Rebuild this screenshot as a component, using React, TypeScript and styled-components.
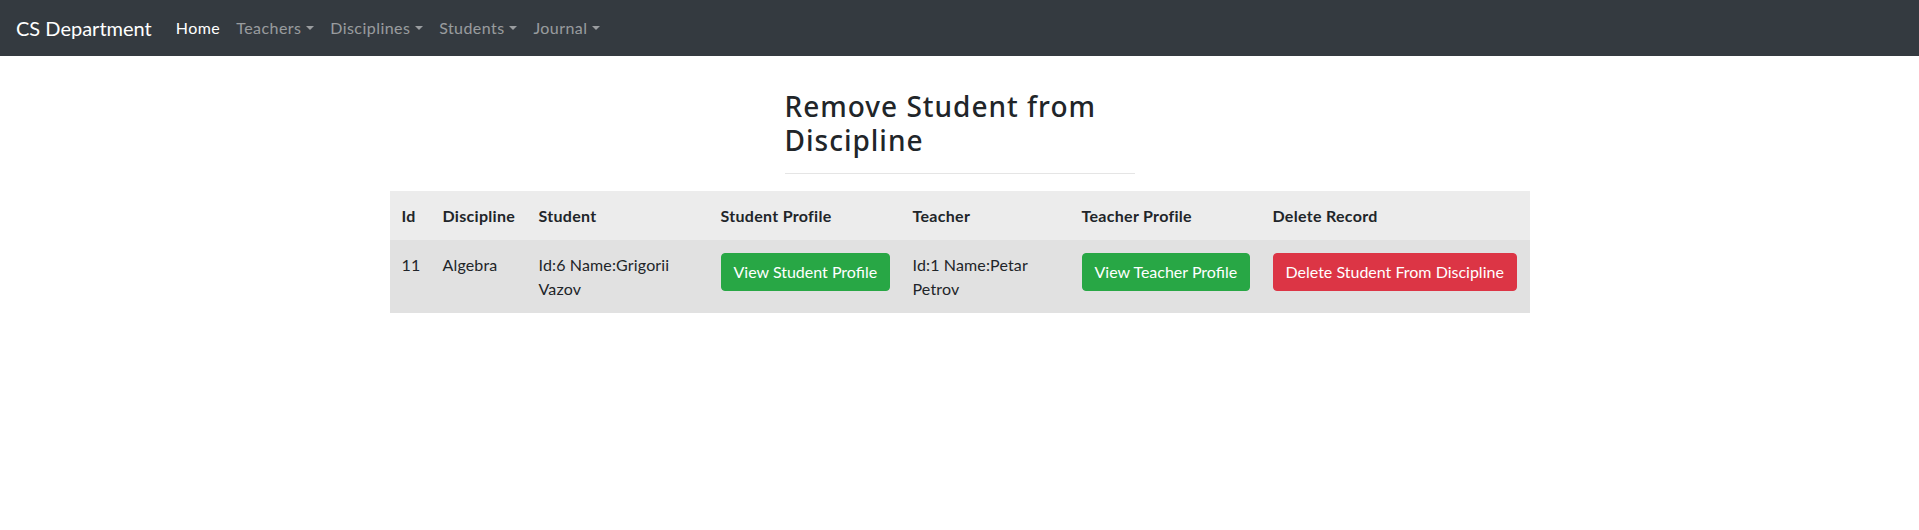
import React from "react";
import styled, { createGlobalStyle } from "styled-components";

const Global = createGlobalStyle`
  * { box-sizing: border-box; }
  html, body { margin: 0; padding: 0; background: #fff; }
  body {
    font-family: Lato, "Liberation Sans", sans-serif;
    font-size: 16px;
    line-height: 1.5;
    color: #212529;
  }
`;

const NavBar = styled.nav`
  display: flex;
  align-items: center;
  height: 56px;
  padding: 8px 16px;
  background: #343a40;
`;

const Brand = styled.a`
  font-size: 20px;
  line-height: 30px;
  padding: 5px 0;
  margin-right: 16px;
  color: #fff;
  text-decoration: none;
  white-space: nowrap;
`;

const NavList = styled.ul`
  display: flex;
  list-style: none;
  margin: 0;
  padding: 0;
`;

const NavLink = styled.a<{ $active?: boolean; $dropdown?: boolean }>`
  display: block;
  padding: 8px 8px;
  letter-spacing: 0.45px;
  color: ${(p) => (p.$active ? "#fff" : "rgba(255,255,255,0.5)")};
  text-decoration: none;
  white-space: nowrap;
  ${(p) =>
    p.$dropdown &&
    `
    &::after {
      content: "";
      display: inline-block;
      margin-left: 0.3em;
      vertical-align: 0.255em;
      border-top: 0.3em solid;
      border-right: 0.3em solid transparent;
      border-left: 0.3em solid transparent;
      border-bottom: 0;
    }
  `}
`;

const Main = styled.main`
  padding-top: 34px;
`;

const TitleBlock = styled.section`
  width: 350px;
  margin: 0 auto;
`;

const Title = styled.h3`
  margin: 0;
  font-family: "Noto Sans", "Open Sans", sans-serif;
  font-size: 28px;
  font-weight: 500;
  line-height: 1.2;
  letter-spacing: 1px;
  color: #212529;
`;

const Rule = styled.hr`
  margin: 16px 0 17px;
  border: 0;
  border-top: 1px solid rgba(0, 0, 0, 0.1);
`;

const Table = styled.table`
  width: 1140px;
  margin: 0 auto;
  border-collapse: collapse;
  table-layout: fixed;
`;

const HeadCell = styled.th`
  padding: 12px;
  text-align: left;
  font-weight: 700;
  letter-spacing: 0.3px;
  vertical-align: bottom;
  background: #ececec;
  border-top: 1px solid #ececec;
`;

const BodyRow = styled.tr`
  background: #e1e1e1;
`;

const Cell = styled.td`
  padding: 12px;
  vertical-align: top;
  letter-spacing: 0.15px;
  border-top: 1px solid #e1e1e1;
`;

const Button = styled.button<{ $variant: "success" | "danger" }>`
  display: inline-block;
  padding: 6px 12px;
  font-family: inherit;
  font-size: 16px;
  line-height: 1.5;
  letter-spacing: 0;
  color: #fff;
  border-radius: 4px;
  cursor: pointer;
  white-space: nowrap;
  background: ${(p) => (p.$variant === "success" ? "#28a745" : "#dc3545")};
  border: 1px solid ${(p) => (p.$variant === "success" ? "#28a745" : "#dc3545")};
`;

const columns = [
  { title: "Id", width: 41 },
  { title: "Discipline", width: 96 },
  { title: "Student", width: 182 },
  { title: "Student Profile", width: 192 },
  { title: "Teacher", width: 169 },
  { title: "Teacher Profile", width: 191 },
  { title: "Delete Record", width: 269 },
];

export default function App() {
  return (
    <>
      <Global />
      <NavBar>
        <Brand href="#">CS Department</Brand>
        <NavList>
          <li><NavLink href="#" $active>Home</NavLink></li>
          <li><NavLink href="#" $dropdown>Teachers</NavLink></li>
          <li><NavLink href="#" $dropdown>Disciplines</NavLink></li>
          <li><NavLink href="#" $dropdown>Students</NavLink></li>
          <li><NavLink href="#" $dropdown>Journal</NavLink></li>
        </NavList>
      </NavBar>
      <Main>
        <TitleBlock>
          <Title>Remove Student from Discipline</Title>
          <Rule />
        </TitleBlock>
        <Table>
          <colgroup>
            {columns.map((c) => (
              <col key={c.title} style={{ width: c.width }} />
            ))}
          </colgroup>
          <thead>
            <tr>
              {columns.map((c) => (
                <HeadCell key={c.title}>{c.title}</HeadCell>
              ))}
            </tr>
          </thead>
          <tbody>
            <BodyRow>
              <Cell>11</Cell>
              <Cell>Algebra</Cell>
              <Cell>Id:6 Name:Grigorii Vazov</Cell>
              <Cell><Button $variant="success">View Student Profile</Button></Cell>
              <Cell>Id:1 Name:Petar Petrov</Cell>
              <Cell><Button $variant="success">View Teacher Profile</Button></Cell>
              <Cell><Button $variant="danger">Delete Student From Discipline</Button></Cell>
            </BodyRow>
          </tbody>
        </Table>
      </Main>
    </>
  );
}
